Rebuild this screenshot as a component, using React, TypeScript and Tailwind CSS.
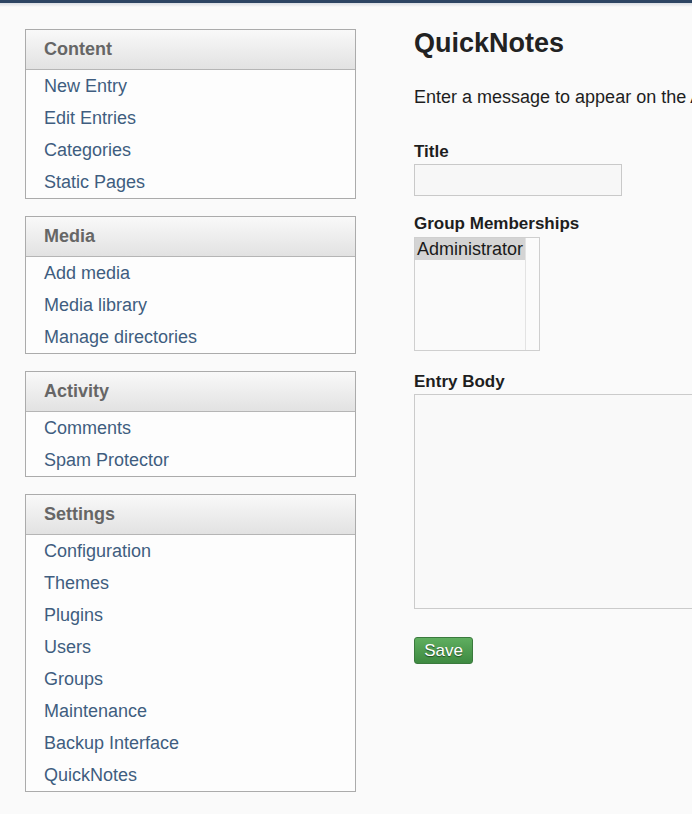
import React from 'react';

interface NavGroup {
  title: string;
  items: string[];
}

const groups: NavGroup[] = [
  { title: 'Content',  items: ['New Entry', 'Edit Entries', 'Categories', 'Static Pages'] },
  { title: 'Media',    items: ['Add media', 'Media library', 'Manage directories'] },
  { title: 'Activity', items: ['Comments', 'Spam Protector'] },
  {
    title: 'Settings',
    items: ['Configuration', 'Themes', 'Plugins', 'Users', 'Groups', 'Maintenance', 'Backup Interface', 'QuickNotes'],
  },
];

function NavBox({ group }: { group: NavGroup }) {
  return (
    <div className="border border-[#ababab] bg-[#fdfdfd]">
      <div className="h-[40px] flex items-center px-[18px] border-b border-[#b5b5b5] bg-gradient-to-b from-[#f9f9f9] to-[#e2e2e2]">
        <span className="text-[18px] font-bold text-[#666666]">{group.title}</span>
      </div>
      <ul>
        {group.items.map(item => (
          <li key={item} className="h-[32px] flex items-center px-[18px]">
            <a href="#" className="text-[18px] text-[#3f5d80]">{item}</a>
          </li>
        ))}
      </ul>
    </div>
  );
}

export default function App() {
  return (
    <div
      className="min-h-[814px] bg-[#fafafa] overflow-hidden"
      style={{ fontFamily: '"Liberation Sans", Arial, sans-serif' }}
    >
      {/* Top bar */}
      <div className="h-[3px] bg-[#2d4563]" />
      <div className="h-[4px] bg-gradient-to-b from-[#d9dde3] to-[#fafafa]" />

      <div className="flex pl-[25px] pt-[22px]">
        {/* Sidebar */}
        <aside className="w-[331px] shrink-0 flex flex-col gap-[17px] pb-6">
          {groups.map(g => (
            <NavBox key={g.title} group={g} />
          ))}
        </aside>

        {/* Main */}
        <main className="ml-[58px] flex-1 min-w-0 text-[#1e1e1e]">
          <h1 className="text-[27px] font-bold leading-[28px] text-[#222222]">QuickNotes</h1>
          <p className="mt-[28px] text-[18px] leading-[24px] whitespace-nowrap">
            Enter a message to appear on the Admin dashboard.
          </p>

          <label className="block mt-[33px] text-[17px] font-bold leading-[20px]">Title</label>
          <input
            type="text"
            className="block mt-[2px] w-[208px] h-[32px] border border-[#c9c9c9] bg-[#f7f7f7]"
          />

          <label className="block mt-[18px] text-[17px] font-bold leading-[20px]">Group Memberships</label>
          <div className="mt-[3px] w-[126px] h-[114px] border border-[#cfcfcf] bg-[#fafafa] flex">
            <div className="w-[110px]">
              <div className="h-[22px] bg-[#d4d4d4] pl-[2px] text-[18px] leading-[22px] text-[#1a1a1a]">
                Administrator
              </div>
            </div>
            <div className="flex-1 border-l border-[#e3e3e3] bg-[#fbfbfb]" />
          </div>

          <label className="block mt-[21px] text-[17px] font-bold leading-[20px]">Entry Body</label>
          <textarea className="block mt-[2px] w-[400px] h-[215px] border border-[#cbcbcb] bg-[#f9f9f9] resize-none" />

          <button className="mt-[28px] h-[27px] w-[59px] rounded-[3px] border border-[#3a7a3d] bg-gradient-to-b from-[#5fae5f] to-[#3e8a41] text-white text-[17px] leading-none [text-shadow:0_1px_1px_rgba(0,0,0,0.5)]">
            Save
          </button>
        </main>
      </div>
    </div>
  );
}
